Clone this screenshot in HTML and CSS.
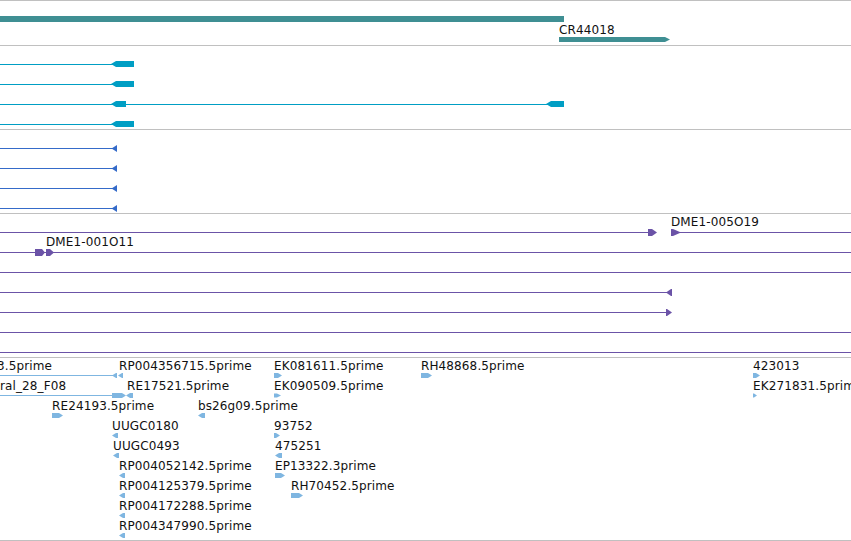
FILE: index.html
```html
<!DOCTYPE html>
<html>
<head>
<meta charset="utf-8">
<link rel="stylesheet" href="styles.css">
</head>
<body>
<div class="browser">
  <section class="track track-gene">
    <svg class="canvas" width="851" height="44" viewBox="0 1 851 44">
      <rect class="teal" x="0" y="16" width="564" height="6"/>
      <text class="lbl" x="559" y="34">CR44018</text>
      <polygon class="teal" points="559,37 665,37 670,39.5 665,42 559,42"/>
    </svg>
  </section>

  <section class="track track-tx">
    <svg class="canvas" width="851" height="83" viewBox="0 46 851 83">
      <g class="cyan">
        <rect x="0" y="64" width="113" height="1"/>
        <polygon points="111,64 116,61 134,61 134,67 116,67"/>
        <rect x="0" y="84" width="113" height="1"/>
        <polygon points="111,84 116,81 134,81 134,87 116,87"/>
        <rect x="0" y="104" width="564" height="1"/>
        <polygon points="111,104 116,101 126,101 126,107 116,107"/>
        <polygon points="546,104 551,101 564,101 564,107 551,107"/>
        <rect x="0" y="124" width="113" height="1"/>
        <polygon points="111,124 116,121 134,121 134,127 116,127"/>
      </g>
    </svg>
  </section>

  <section class="track track-est">
    <svg class="canvas" width="851" height="83" viewBox="0 130 851 83">
      <g class="blue">
        <rect x="0" y="148" width="113" height="1"/>
        <polygon points="111.5,148.5 117,145 117,152"/>
        <rect x="0" y="168" width="113" height="1"/>
        <polygon points="111.5,168.5 117,165 117,172"/>
        <rect x="0" y="188" width="113" height="1"/>
        <polygon points="111.5,188.5 117,185 117,192"/>
        <rect x="0" y="208" width="113" height="1"/>
        <polygon points="111.5,208.5 117,205 117,212"/>
      </g>
    </svg>
  </section>

  <section class="track track-clone">
    <svg class="canvas" width="851" height="143" viewBox="0 214 851 143">
      <text class="lbl" x="671" y="226">DME1-005O19</text>
      <text class="lbl" x="46" y="246">DME1-001O11</text>
      <g class="purple">
        <rect x="0" y="232" width="653" height="1"/>
        <polygon points="648,229 652,229 657,232.5 652,236 648,236"/>
        <rect x="675" y="232" width="176" height="1"/>
        <polygon points="671,229 673,229 681,232.5 673,236 671,236"/>
        <rect x="0" y="252" width="851" height="1"/>
        <polygon points="35,249 42,249 45,252.5 42,256 35,256"/>
        <polygon points="46,249 50,249 54,252.5 50,256 46,256"/>
        <rect x="0" y="272" width="851" height="1"/>
        <rect x="0" y="292" width="668" height="1"/>
        <polygon points="666,292.5 671,289 672,289 672,296 671,296"/>
        <rect x="0" y="312" width="668" height="1"/>
        <polygon points="666,309 667,309 672,312.5 667,316 666,316"/>
        <rect x="0" y="332" width="851" height="1"/>
        <rect x="0" y="352" width="851" height="1"/>
      </g>
    </svg>
  </section>

  <section class="track track-reads">
    <svg class="canvas" width="851" height="182" viewBox="0 358 851 182">
      <g class="lbls">
        <text class="lbl" x="-3" y="370">3.5prime</text>
        <text class="lbl" x="119" y="370">RP004356715.5prime</text>
        <text class="lbl" x="274" y="370">EK081611.5prime</text>
        <text class="lbl" x="421" y="370">RH48868.5prime</text>
        <text class="lbl" x="753" y="370">423013</text>

        <text class="lbl" x="0" y="390">ral_28_F08</text>
        <text class="lbl" x="127" y="390">RE17521.5prime</text>
        <text class="lbl" x="274" y="390">EK090509.5prime</text>
        <text class="lbl" x="753" y="390">EK271831.5prime</text>

        <text class="lbl" x="52" y="410">RE24193.5prime</text>
        <text class="lbl" x="198" y="410">bs26g09.5prime</text>

        <text class="lbl" x="112" y="430">UUGC0180</text>
        <text class="lbl" x="274" y="430">93752</text>

        <text class="lbl" x="113" y="450">UUGC0493</text>
        <text class="lbl" x="275" y="450">475251</text>

        <text class="lbl" x="119" y="470">RP004052142.5prime</text>
        <text class="lbl" x="275" y="470">EP13322.3prime</text>

        <text class="lbl" x="119" y="490">RP004125379.5prime</text>
        <text class="lbl" x="291" y="490">RH70452.5prime</text>

        <text class="lbl" x="119" y="510">RP004172288.5prime</text>

        <text class="lbl" x="119" y="530">RP004347990.5prime</text>
      </g>
      <g class="sky">
        <rect x="0" y="375" width="113" height="1"/>
        <polygon points="112,375.5 116,373 117,373 117,378 116,378"/>
        <polygon points="118,375.5 122,373 123,373 123,378 122,378"/>
        <polygon points="274,373 278,373 282,375.5 278,378 274,378"/>
        <polygon points="421,373 428,373 432,375.5 428,378 421,378"/>
        <polygon points="753,373 756,373 760,375.5 756,378 753,378"/>

        <rect x="0" y="395" width="113" height="1"/>
        <polygon points="112,393 122,393 126,395.5 122,398 112,398"/>
        <polygon points="126,395.5 130,393 133,393 133,398 130,398"/>
        <polygon points="274,393.5 277,393.5 281,395.5 277,397.5 274,397.5"/>
        <polygon points="753,393.5 754,393.5 757,395.5 754,397.5 753,397.5"/>

        <polygon points="52,413 59,413 63,415.5 59,418 52,418"/>
        <polygon points="198,415.5 202,413 205,413 205,418 202,418"/>

        <polygon points="112,435.5 116,433 118,433 118,438 116,438"/>
        <polygon points="274,433 276,433 280,435.5 276,438 274,438"/>

        <polygon points="113,455.5 117,453 119,453 119,458 117,458"/>
        <polygon points="275,455.5 279,453 282,453 282,458 279,458"/>

        <polygon points="119,475.5 123,473 125,473 125,478 123,478"/>
        <polygon points="275,473 281,473 285,475.5 281,478 275,478"/>

        <polygon points="119,495.5 123,493 125,493 125,498 123,498"/>
        <polygon points="291,493 299,493 303,495.5 299,498 291,498"/>

        <polygon points="119,515.5 123,513 125,513 125,518 123,518"/>

        <polygon points="119,535.5 123,533 125,533 125,538 123,538"/>
      </g>
    </svg>
  </section>
</div>
</body>
</html>
```

FILE: styles.css
```css
html, body {
  margin: 0;
  padding: 0;
  background: #ffffff;
  overflow: hidden;
}

.browser {
  width: 851px;
  display: flex;
  flex-direction: column;
  border-top: 1px solid #c0c0c0;
}

.track {
  border-bottom: 1px solid #c0c0c0;
  overflow: hidden;
}

.track-gene { height: 44px; }
.track-tx { height: 83px; }
.track-est { height: 83px; }
.track-clone { height: 143px; }
.track-reads { height: 182px; }

.canvas {
  display: block;
  shape-rendering: crispEdges;
}

.canvas polygon {
  shape-rendering: auto;
}

.lbl {
  font-family: "DejaVu Sans", "Liberation Sans", sans-serif;
  font-size: 12px;
  letter-spacing: 0.12px;
  fill: #111111;
}

.teal { fill: #3f8f93; }
.cyan { fill: #009ec4; }
.blue { fill: #356bc9; }
.purple { fill: #6b53a7; }
.sky { fill: #7fb6e1; }
```
